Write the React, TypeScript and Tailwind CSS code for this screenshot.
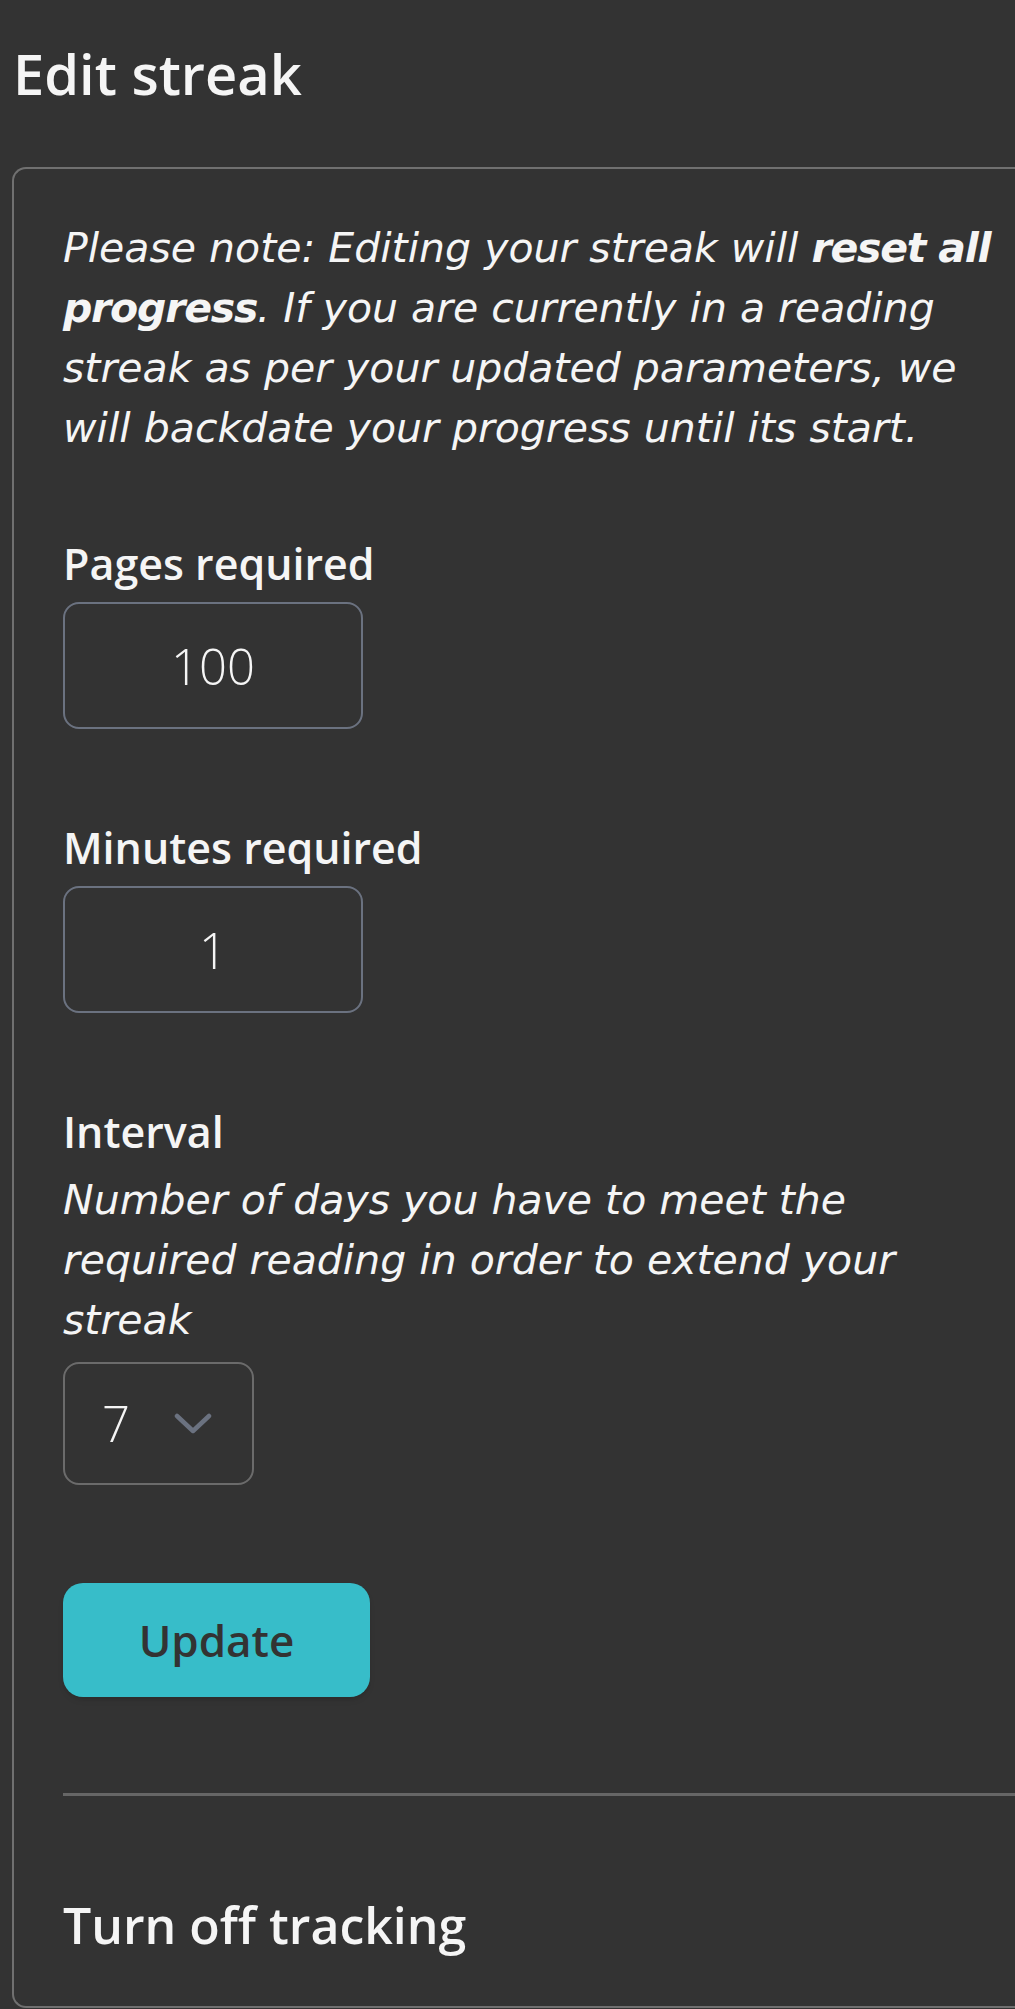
import React, { useState } from 'react'

const Chevron = () => (
  <svg width="38" height="24" viewBox="0 0 38 24" fill="none">
    <polyline
      points="3,4 19,19 35,4"
      stroke="#6b7280"
      strokeWidth="4.5"
      strokeLinecap="round"
      strokeLinejoin="round"
    />
  </svg>
)

const NumberField: React.FC<{ label: string; value: string; onChange: (v: string) => void }> = ({ label, value, onChange }) => (
  <div className="flex flex-col">
    <label className="text-[43px] leading-[60px] font-semibold">{label}</label>
    <input
      value={value}
      onChange={(e) => onChange(e.target.value)}
      className="mt-[8px] w-[300px] h-[127px] border-2 border-[#6b7280] rounded-[16px] bg-transparent
        text-center text-[49px] font-light text-[#f5f5f5] outline-none"
    />
  </div>
)

const App: React.FC = () => {
  const [pages, setPages] = useState("100")
  const [minutes, setMinutes] = useState("1")

  return (
    <div className="min-h-screen bg-[#333333] pl-[12px] pt-[45px] text-[#f5f5f5] font-['Open_Sans',sans-serif] overflow-hidden">
      <h1 className="text-[56px] leading-[56px] font-semibold pl-[1px]">Edit streak</h1>

      {/* card runs past the right edge, like on the phone */}
      <div className="mt-[66px] w-[1060px] border-2 border-r-0 border-[#707070] rounded-l-[14px] pl-[49px] pt-[49px] pb-[51px]">
        <p className="w-[960px] text-[41px] leading-[60px] italic font-['DejaVu_Sans',sans-serif]">
          Please note: Editing your streak will <span className="font-bold tracking-[-0.03em]">reset all progress</span>. If you are
          currently in a reading streak as per your updated parameters, we will backdate your progress until its start.
        </p>

        <div className="mt-[76px]">
          <NumberField label="Pages required" value={pages} onChange={setPages} />
        </div>

        <div className="mt-[89px]">
          <NumberField label="Minutes required" value={minutes} onChange={setMinutes} />
        </div>

        <div className="mt-[89px] flex flex-col">
          <span className="text-[43px] leading-[60px] font-semibold">Interval</span>
          <p className="mt-[8px] w-[960px] text-[41px] leading-[60px] italic font-['DejaVu_Sans',sans-serif]">
            Number of days you have to meet the required reading in order to extend your streak
          </p>
          <div className="mt-[12px] w-[191px] h-[123px] border-2 border-[#6b6b6b] rounded-[16px] flex items-center pl-[37px] gap-[44px]">
            <span className="text-[49px] font-light leading-none">7</span>
            <Chevron />
          </div>
        </div>

        <button className="mt-[98px] w-[307px] h-[114px] rounded-[20px] bg-[#37bdc9] text-[#333333] text-[44px] font-semibold shadow-md block">
          Update
        </button>

        <div className="mt-[96px] h-[3px] bg-[#666666]"></div>

        <h2 className="mt-[99px] text-[50px] leading-[60px] font-semibold">Turn off tracking</h2>
      </div>
    </div>
  )
}

export default App
